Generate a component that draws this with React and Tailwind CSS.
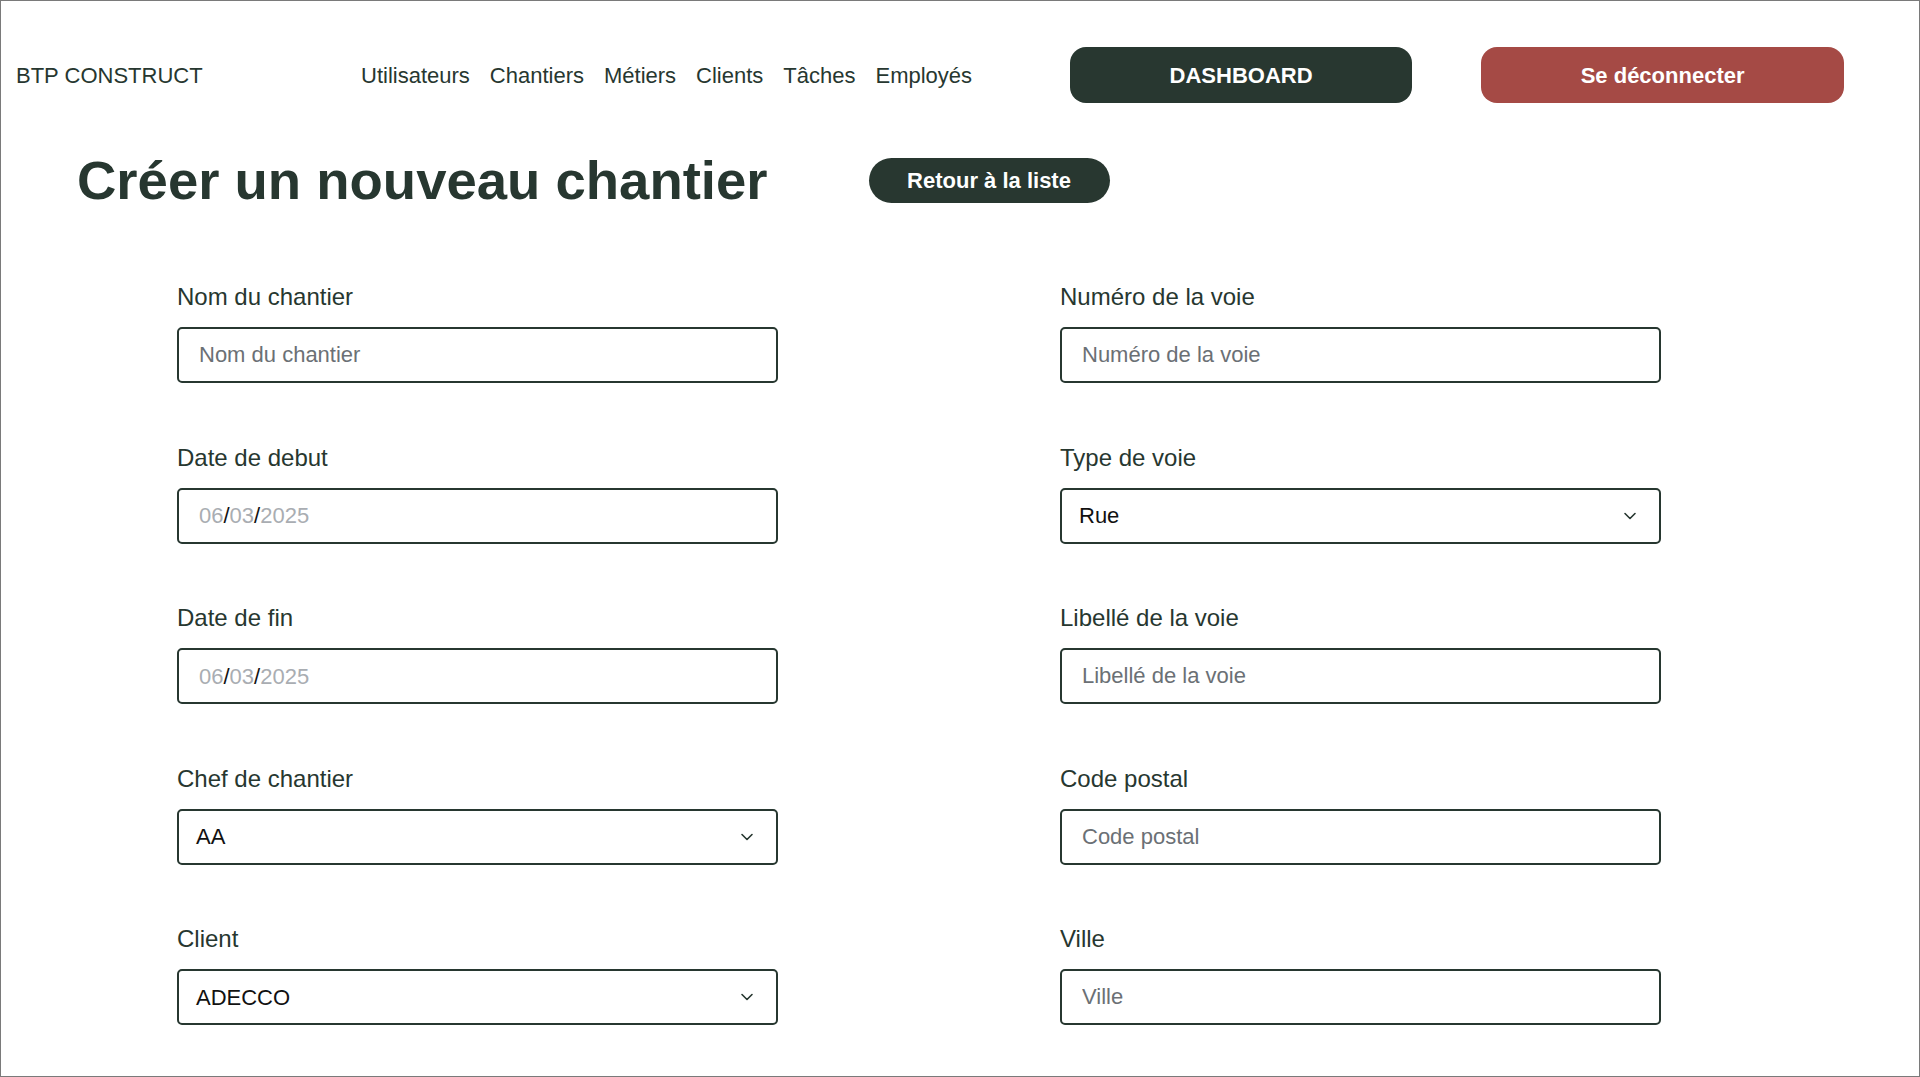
import React from 'react';

const nav = ['Utilisateurs', 'Chantiers', 'Métiers', 'Clients', 'Tâches', 'Employés'];

const left = [
  { label: 'Nom du chantier', type: 'text', placeholder: 'Nom du chantier' },
  { label: 'Date de debut', type: 'date' },
  { label: 'Date de fin', type: 'date' },
  { label: 'Chef de chantier', type: 'select', value: 'AA' },
  { label: 'Client', type: 'select', value: 'ADECCO' },
];

const right = [
  { label: 'Numéro de la voie', type: 'text', placeholder: 'Numéro de la voie' },
  { label: 'Type de voie', type: 'select', value: 'Rue' },
  { label: 'Libellé de la voie', type: 'text', placeholder: 'Libellé de la voie' },
  { label: 'Code postal', type: 'text', placeholder: 'Code postal' },
  { label: 'Ville', type: 'text', placeholder: 'Ville' },
];

function Chevron() {
  return (
    <svg width="16" height="16" viewBox="0 0 16 16" fill="none" className="shrink-0">
      <path d="M3 5.5l5 5 5-5" stroke="#273730" strokeWidth="1.6" strokeLinecap="round" strokeLinejoin="round" />
    </svg>
  );
}

function Field({ f }) {
  const box = 'flex h-[56px] w-[601px] items-center rounded-[5px] border-2 border-[#273730] bg-white text-[22px]';
  let control;
  if (f.type === 'text') {
    control = (
      <input
        type="text"
        placeholder={f.placeholder}
        className={`${box} px-[20px] text-[#273730] outline-none placeholder:text-[#6b7075]`}
      />
    );
  } else if (f.type === 'date') {
    control = (
      <div className={`${box} px-[20px] text-[#a9adb2]`}>
        <span>06</span>
        <span className="text-[#111]">/</span>
        <span>03</span>
        <span className="text-[#111]">/</span>
        <span>2025</span>
      </div>
    );
  } else {
    control = (
      <div className={`${box} justify-between pl-[17px] pr-[21px] text-[#111]`}>
        <span>{f.value}</span>
        <Chevron />
      </div>
    );
  }
  return (
    <div className="flex flex-col gap-[16px]">
      <label className="text-[24px] leading-[28px] font-light text-[#273730]">{f.label}</label>
      {control}
    </div>
  );
}

export default function App() {
  return (
    <div
      className="h-[1077px] overflow-hidden border border-[#7a7a7a] bg-white text-[#273730]"
      style={{ fontFamily: '"Liberation Sans", Arial, sans-serif' }}
    >
      <header className="mt-[46px] flex h-[56px] items-center">
        <div className="w-[360px] pl-[15px] text-[22px] text-[#273730]">BTP CONSTRUCT</div>
        <nav className="flex gap-[20px] text-[22px] text-[#273730]">
          {nav.map((n) => (
            <a key={n} href="#" className="whitespace-nowrap">{n}</a>
          ))}
        </nav>
        <button className="ml-[98px] h-[56px] w-[342px] rounded-[16px] bg-[#283730] text-[22px] font-bold text-white">
          DASHBOARD
        </button>
        <button className="ml-[69px] h-[56px] w-[363px] rounded-[16px] bg-[#a54a45] text-[22px] font-bold text-white">
          Se déconnecter
        </button>
      </header>

      <div className="mt-[55px] flex h-[45px] items-center pl-[76px]">
        <h1 className="text-[54.5px] leading-[45px] font-bold text-[#273730]">Créer un nouveau chantier</h1>
        <button className="ml-[101px] h-[45px] w-[241px] rounded-full bg-[#283730] text-[22px] font-bold text-white">
          Retour à la liste
        </button>
      </div>

      <form className="mt-[80px] grid grid-cols-[601px_601px] gap-x-[282px] pl-[176px]">
        <div className="flex flex-col gap-[60.5px]">
          {left.map((f) => (
            <Field key={f.label} f={f} />
          ))}
        </div>
        <div className="flex flex-col gap-[60.5px]">
          {right.map((f) => (
            <Field key={f.label} f={f} />
          ))}
        </div>
      </form>
    </div>
  );
}
